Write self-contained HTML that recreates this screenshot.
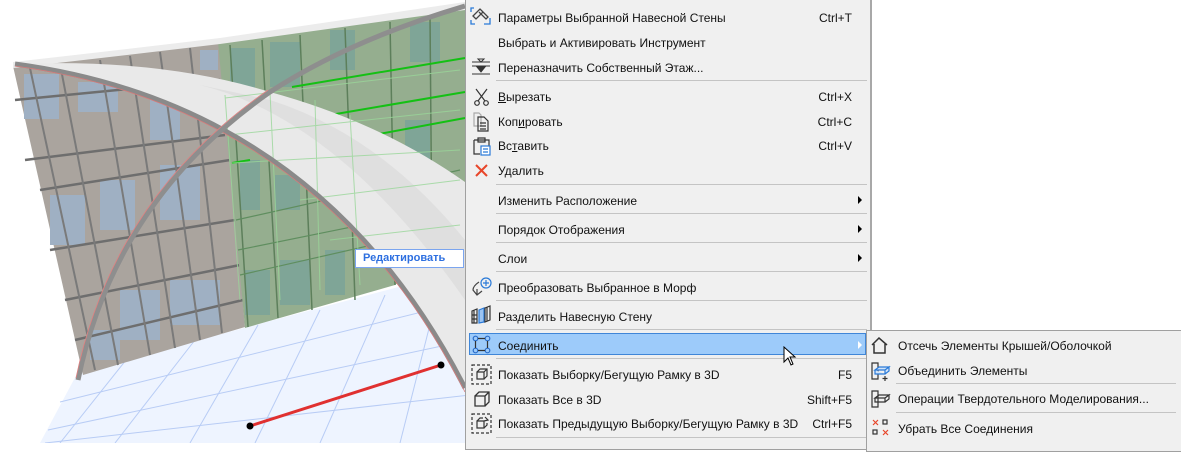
<!DOCTYPE html>
<html><head><meta charset="utf-8"><style>
html,body{margin:0;padding:0;background:#fff;}
body{width:1181px;height:443px;position:relative;overflow:hidden;font-family:"Liberation Sans","Noto Sans CJK SC",sans-serif;}
.menu{position:absolute;left:465px;top:-2px;width:404px;height:450px;background:#f0f0f0;border:1px solid #a0a0a0;border-right:2px solid #a8a8a8;}
.t{position:absolute;font-size:12px;color:#111;white-space:nowrap;line-height:14px;}
.k{position:absolute;font-size:12px;color:#111;white-space:nowrap;line-height:14px;text-align:right;}
.sep{position:absolute;height:1px;background:#c4c4c4;}
.arr{position:absolute;width:0;height:0;border-left:4px solid #000;border-top:4px solid transparent;border-bottom:4px solid transparent;}
.sub{position:absolute;left:866px;top:330px;width:320px;height:120px;background:#f0f0f0;border:1px solid #a0a0a0;}
svg.i{position:absolute;}
</style></head><body>
<svg width="470" height="443" style="position:absolute;left:0;top:0">
  <!-- floor -->
  <polygon points="40,443 78,372 470,268 470,443" fill="#eef4ff"/>
  <g stroke="#b8ccf5" stroke-width="1">
    <line x1="60" y1="402" x2="470" y2="300"/>
    <line x1="48" y1="430" x2="470" y2="340"/>
    <line x1="45" y1="443" x2="470" y2="395"/>
    <line x1="130" y1="355" x2="60" y2="443"/>
    <line x1="195" y1="340" x2="115" y2="443"/>
    <line x1="258" y1="325" x2="190" y2="443"/>
    <line x1="320" y1="310" x2="255" y2="443"/>
    <line x1="385" y1="295" x2="320" y2="443"/>
    <line x1="440" y1="285" x2="400" y2="443"/>
  </g>
  <!-- gray facade -->
  <polygon points="13,66 220,42 245,327 83,375" fill="#aaa49e"/>
  <g fill="#9fb0c3">
    <rect x="24" y="74" width="35" height="45"/><rect x="78" y="82" width="40" height="30"/>
    <rect x="50" y="195" width="35" height="50"/><rect x="100" y="180" width="35" height="50"/>
    <rect x="160" y="165" width="40" height="55"/><rect x="120" y="290" width="40" height="50"/>
    <rect x="170" y="280" width="50" height="45"/><rect x="150" y="100" width="30" height="40"/>
    <rect x="200" y="50" width="18" height="20"/><rect x="90" y="330" width="30" height="30"/>
  </g>
  <g stroke="#6e6e6e" stroke-width="2.5">
    <line x1="15" y1="100" x2="220" y2="80"/><line x1="25" y1="160" x2="225" y2="135"/>
    <line x1="40" y1="190" x2="230" y2="160"/><line x1="50" y1="250" x2="235" y2="220"/>
    <line x1="65" y1="300" x2="240" y2="265"/><line x1="75" y1="340" x2="243" y2="300"/>
  </g>
  <g stroke="#7a7a7a" stroke-width="2">
    <line x1="30" y1="68" x2="95" y2="370"/><line x1="60" y1="64" x2="118" y2="365"/>
    <line x1="100" y1="60" x2="150" y2="355"/><line x1="130" y1="56" x2="175" y2="348"/>
    <line x1="160" y1="52" x2="200" y2="340"/><line x1="190" y1="48" x2="222" y2="333"/>
  </g>
  <!-- green facade -->
  <polygon points="218,42 465,8 465,230 395,285 245,328" fill="#95ae8f"/>
  <g fill="#7fa597">
    <rect x="230" y="48" width="25" height="40"/><rect x="270" y="42" width="30" height="45"/>
    <rect x="330" y="30" width="25" height="40"/><rect x="410" y="22" width="30" height="40"/>
    <rect x="405" y="120" width="25" height="50"/><rect x="240" y="160" width="20" height="50"/>
    <rect x="275" y="175" width="25" height="35"/><rect x="245" y="270" width="25" height="45"/>
    <rect x="280" y="260" width="30" height="45"/><rect x="325" y="250" width="20" height="45"/>
  </g>
  <g stroke="#5d7f5b" stroke-width="1.5">
    <line x1="230" y1="45" x2="248" y2="327"/><line x1="262" y1="40" x2="278" y2="318"/>
    <line x1="300" y1="35" x2="312" y2="310"/><line x1="345" y1="28" x2="355" y2="300"/>
    <line x1="390" y1="22" x2="395" y2="285"/><line x1="430" y1="16" x2="432" y2="250"/>
  </g>
  <g stroke="#14c014" stroke-width="2">
    <line x1="292" y1="87" x2="465" y2="58"/><line x1="330" y1="115" x2="465" y2="92"/>
    <line x1="363" y1="137" x2="465" y2="118"/><line x1="232" y1="163" x2="250" y2="160"/>
  </g>
  <g stroke="#5f8e5f" stroke-width="1.2" fill="none">
    <line x1="236" y1="220" x2="460" y2="170"/><line x1="238" y1="250" x2="460" y2="205"/>
    <line x1="240" y1="275" x2="460" y2="225"/>
  </g>
  <!-- roof top thin band -->
  <path d="M13,62 Q120,50 220,38 L465,2 L465,10 L220,44 Q120,56 13,68 Z" fill="#ececec"/>
  <!-- big white surface -->
  <path d="M15,64 Q320,105 465,388 L465,182 Q380,122 270,92 Q160,58 15,64 Z" fill="#e9e9e9"/>
  <path d="M200,85 Q340,120 465,300 L465,240 Q380,135 270,100 Z" fill="#d6d6d6" opacity="0.5"/>
  <g stroke="#9ad79a" stroke-width="1" opacity="0.8">
    <line x1="225" y1="98" x2="460" y2="70"/><line x1="228" y1="135" x2="460" y2="110"/>
    <line x1="232" y1="163" x2="460" y2="150"/><line x1="300" y1="200" x2="460" y2="180"/>
    <line x1="330" y1="240" x2="460" y2="225"/>
    <line x1="225" y1="95" x2="240" y2="300"/><line x1="270" y1="92" x2="280" y2="300"/>
    <line x1="315" y1="100" x2="320" y2="290"/><line x1="350" y1="115" x2="360" y2="285"/>
  </g>
  <!-- arches -->
  <path d="M15,64 Q320,105 465,388" fill="none" stroke="#8a8a8a" stroke-width="5"/>
  <path d="M15,66 Q320,108 465,392" fill="none" stroke="#d77a7a" stroke-width="0.8"/>
  <path d="M78,380 Q115,200 270,92 Q350,40 465,6" fill="none" stroke="#8e8e8e" stroke-width="5"/>
  <path d="M76,378 Q113,198 268,90" fill="none" stroke="#e08080" stroke-width="0.8"/>
  <!-- red line -->
  <line x1="250" y1="426" x2="441" y2="365" stroke="#e03030" stroke-width="3"/>
  <circle cx="250" cy="426" r="3.5" fill="#000"/><circle cx="441" cy="365" r="3.5" fill="#000"/>
</svg>
<div style="position:absolute;left:355px;top:249px;background:#fff;border:1px solid #7ba5ef;font-size:11px;font-weight:bold;color:#2d6fe0;line-height:17px;padding-left:7px;box-sizing:border-box;width:109px;height:19px;">Редактировать</div>

<div class="menu"></div>
<div style="position:absolute;left:469px;top:333px;width:397px;height:22px;background:#9dcbfa;border:1px solid #3f86d8;box-sizing:border-box;"></div>

<div class="sep" style="left:496px;top:80px;width:371px"></div>
<div class="sep" style="left:496px;top:184px;width:371px"></div>
<div class="sep" style="left:496px;top:213px;width:371px"></div>
<div class="sep" style="left:496px;top:242px;width:371px"></div>
<div class="sep" style="left:496px;top:271px;width:371px"></div>
<div class="sep" style="left:496px;top:300px;width:371px"></div>
<div class="sep" style="left:496px;top:329px;width:371px"></div>
<div class="sep" style="left:496px;top:358px;width:371px"></div>
<div class="sep" style="left:496px;top:437px;width:371px"></div>

<div class="t" style="left:498px;top:11px">Параметры Выбранной Навесной Стены</div><div class="k" style="right:329px;top:11px">Ctrl+T</div>
<div class="t" style="left:498px;top:36px">Выбрать и Активировать Инструмент</div>
<div class="t" style="left:498px;top:61px">Переназначить Собственный Этаж...</div>
<div class="t" style="left:498px;top:90px"><u>В</u>ырезать</div><div class="k" style="right:329px;top:90px">Ctrl+X</div>
<div class="t" style="left:498px;top:115px">Коп<u>и</u>ровать</div><div class="k" style="right:329px;top:115px">Ctrl+C</div>
<div class="t" style="left:498px;top:139px">Вс<u>т</u>авить</div><div class="k" style="right:329px;top:139px">Ctrl+V</div>
<div class="t" style="left:498px;top:164px">Удалить</div>
<div class="t" style="left:498px;top:194px">Изменить Расположение</div>
<div class="t" style="left:498px;top:223px">Порядок Отображения</div>
<div class="t" style="left:498px;top:252px">Слои</div>
<div class="t" style="left:498px;top:281px">Преобразовать Выбранное в Морф</div>
<div class="t" style="left:498px;top:310px">Разделить Навесную Стену</div>
<div class="t" style="left:498px;top:339px">Соединить</div>
<div class="t" style="left:498px;top:368px">Показать Выборку/Бегущую Рамку в 3D</div><div class="k" style="right:329px;top:368px">F5</div>
<div class="t" style="left:498px;top:393px">Показать Все в 3D</div><div class="k" style="right:329px;top:393px">Shift+F5</div>
<div class="t" style="left:498px;top:417px">Показать Предыдущую Выборку/Бегущую Рамку в 3D</div><div class="k" style="right:329px;top:417px">Ctrl+F5</div>

<div class="arr" style="left:858px;top:196px"></div>
<div class="arr" style="left:858px;top:225px"></div>
<div class="arr" style="left:858px;top:254px"></div>
<div class="arr" style="left:858px;top:341px;border-left-color:#fff"></div>

<svg class="i" style="left:470px;top:6px" width="22" height="20" fill="none" stroke-width="1.3">
  <path d="M1,6 L1,2 L4,2 M1,14 L1,18 L5,18 M14,18 L20,18 L20,12" stroke="#2a7ad8"/>
  <path d="M3,10 L10,3 L13,6 L6,13 Z M11,4 L18,11 L16,13 L9,6" stroke="#444"/>
</svg>
<svg class="i" style="left:472px;top:58px" width="20" height="18" stroke="#333" fill="#333">
  <line x1="0" y1="4" x2="18" y2="4"/><line x1="0" y1="8" x2="18" y2="8"/><line x1="0" y1="16" x2="18" y2="16"/>
  <path d="M6,1 L12,1 L9,4 Z" fill="none"/><path d="M5,9 L13,9 L9,14 Z"/>
</svg>
<svg class="i" style="left:473px;top:88px" width="18" height="18" fill="none" stroke="#333" stroke-width="1.2">
  <line x1="3" y1="1" x2="12" y2="13"/><line x1="14" y1="1" x2="5" y2="13"/>
  <circle cx="4" cy="15" r="2.3"/><circle cx="13" cy="15" r="2.3"/>
</svg>
<svg class="i" style="left:472px;top:112px" width="20" height="20" fill="none" stroke-width="1.2">
  <path d="M2,1 L7,1 L9,3 L9,14 L2,14 Z" stroke="#aaa"/>
  <path d="M6,5 L12,5 L16,9 L16,19 L6,19 Z M8,11 L14,11 M8,14 L14,14 M8,17 L14,17" stroke="#333"/>
</svg>
<svg class="i" style="left:471px;top:137px" width="22" height="20" fill="none" stroke-width="1.2">
  <path d="M3,3 L18,3 L18,9 M3,3 L3,17 L9,17 M7,1 L14,1 L14,5 L7,5 Z" stroke="#333"/>
  <rect x="10" y="9" width="9" height="9" fill="#fff" stroke="#2a7ad8"/>
  <path d="M12,12 L17,12 M12,15 L17,15" stroke="#2a7ad8"/>
</svg>
<svg class="i" style="left:474px;top:163px" width="16" height="16" stroke="#e8462a" stroke-width="2">
  <line x1="2" y1="2" x2="13" y2="13"/><line x1="13" y1="2" x2="2" y2="13"/>
</svg>
<svg class="i" style="left:471px;top:277px" width="22" height="20" fill="none" stroke-width="1.2">
  <circle cx="15" cy="6" r="5" stroke="#2a7ad8"/><path d="M15,3 L15,9 M12,6 L18,6" stroke="#2a7ad8"/>
  <path d="M8,5 Q2,9 2,13 L6,18 L11,14 M6,18 L6,12" stroke="#444"/>
</svg>
<svg class="i" style="left:471px;top:305px" width="22" height="20" fill="none" stroke-width="1.2">
  <path d="M1,6 L6,4 L6,18 L1,18 Z M1,10 L6,10 M1,14 L6,14 M3,5 L3,18" stroke="#333"/>
  <path d="M8,5 L13,3 L13,17 L8,18 Z" stroke="#2a7ad8" fill="#9cc4f2"/>
  <path d="M14,3 L19,1 L19,15 L14,17 Z M16,2 L16,16" stroke="#333"/>
</svg>
<svg class="i" style="left:472px;top:335px" width="20" height="20" fill="none" stroke="#2a6cc8" stroke-width="1.2">
  <circle cx="3.5" cy="3.5" r="2.3"/><circle cx="15.5" cy="3.5" r="2.3"/><circle cx="3.5" cy="15.5" r="2.3"/><circle cx="15.5" cy="15.5" r="2.3"/>
  <path d="M6,3.5 L13,3.5 M3.5,6 L3.5,13 M6,15.5 L13,15.5 M15.5,6 L15.5,13" stroke="#333"/>
</svg>
<svg class="i" style="left:471px;top:364px" width="22" height="22" fill="none" stroke="#333" stroke-width="1.2">
  <rect x="1" y="1" width="19" height="19" stroke-dasharray="3,2"/>
  <path d="M6,8 L13,8 L13,15 L6,15 Z M6,8 L9,5 L16,5 L16,12 L13,15 M13,8 L16,5"/>
</svg>
<svg class="i" style="left:473px;top:390px" width="20" height="20" fill="none" stroke="#333" stroke-width="1.3">
  <path d="M2,6 L12,6 L12,16 L2,16 Z M2,6 L6,2 L16,2 L16,12 L12,16 M12,6 L16,2"/>
</svg>
<svg class="i" style="left:471px;top:413px" width="22" height="22" fill="none" stroke="#333" stroke-width="1.2">
  <rect x="1" y="1" width="19" height="19" stroke-dasharray="3,2"/>
  <path d="M6,8 L13,8 L13,15 L6,15 Z M6,8 L9,5 L12,5 M13,15 L16,12 L16,10 M14,4 L17,7 L13,8"/>
</svg>
<svg class="i" style="left:783px;top:346px" width="14" height="22">
  <path d="M1,1 L1,16 L5,12 L8,19 L10,18 L7,11 L12,11 Z" fill="#fff" stroke="#000" stroke-width="1"/>
</svg>

<div class="sub"></div>
<div class="sep" style="left:896px;top:383px;width:280px"></div>
<div class="sep" style="left:896px;top:412px;width:280px"></div>
<div class="t" style="left:898px;top:339px">Отсечь Элементы Крышей/Оболочкой</div>
<div class="t" style="left:898px;top:364px">Объединить Элементы</div>
<div class="t" style="left:898px;top:392px">Операции Твердотельного Моделирования...</div>
<div class="t" style="left:898px;top:422px">Убрать Все Соединения</div>
<svg class="i" style="left:870px;top:336px" width="20" height="20" fill="none" stroke="#333" stroke-width="1.5">
  <path d="M2,9 L9,2 L17,9 M4,8 L4,17 L15,17 L15,8"/>
</svg>
<svg class="i" style="left:870px;top:361px" width="22" height="20" fill="none" stroke-width="1.2">
  <path d="M2,2 L8,2 L8,18 L2,18 Z" stroke="#333"/>
  <path d="M5,9 L9,6 L19,6 L15,9 Z M5,9 L5,13 L15,13 L15,9 L19,6 L19,10 L15,13" stroke="#2a7ad8" fill="#cfe3fa"/>
  <path d="M15,15 L15,20 M12.5,17.5 L17.5,17.5" stroke="#333"/>
</svg>
<svg class="i" style="left:870px;top:389px" width="22" height="20" fill="none" stroke="#333" stroke-width="1.2">
  <path d="M2,2 L8,2 L8,18 L2,18 Z M5,9 L9,6 L19,6 L15,9 Z M5,9 L5,13 L15,13 L15,9 L19,6 L19,10 L15,13"/>
</svg>
<svg class="i" style="left:872px;top:419px" width="18" height="18" fill="none" stroke-width="1.2">
  <path d="M1,1 L6,6 M6,1 L1,6 M11,11 L16,16 M16,11 L11,16" stroke="#e8462a"/>
  <rect x="11" y="1" width="4" height="4" stroke="#333"/><rect x="1" y="11" width="4" height="4" stroke="#333"/>
</svg>
</body></html>
